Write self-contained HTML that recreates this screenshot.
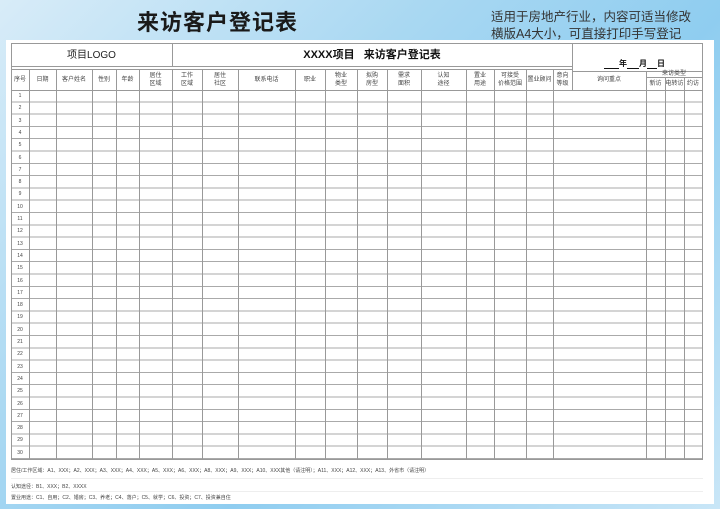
<!DOCTYPE html>
<html><head><meta charset="utf-8"><style>
*{margin:0;padding:0;box-sizing:border-box}
body{width:720px;height:509px;overflow:hidden;position:relative;font-family:"Liberation Sans","Noto Sans CJK SC",sans-serif;
background:linear-gradient(135deg,#d8ecf8 0%,#a9d8f2 35%,#8fcdf0 60%,#c9e6f7 100%)}
.p{position:absolute}
#title{left:0;width:435px;top:5px;text-align:center;font-size:22px;font-weight:bold;color:#1a1a1a;letter-spacing:1px}
#sub{left:491px;top:9px;font-size:12.5px;line-height:17px;color:#333}
#panel{left:6px;top:40px;width:708px;height:464px;background:#fff}
.v{position:absolute;width:1px;background:#999}
.h{position:absolute;height:1px;background:#999}
#grid{left:11px;top:90px;width:692px;height:370px;background:repeating-linear-gradient(to bottom,transparent 0,transparent 11.3px,#aaa 11.3px,#aaa 12.3px);border-left:1px solid #999;border-right:1px solid #999}
.t{position:absolute;font-size:6px;color:#444;text-align:center;line-height:8px}
.n{position:absolute;left:11px;width:18px;font-size:5px;color:#444;text-align:center}
.f{position:absolute;left:11px;font-size:5px;color:#444}
.u{display:inline-block;border-bottom:1px solid #111;height:9px;vertical-align:bottom}
</style></head><body>
<div class="p" id="title">来访客户登记表</div>
<div class="p" id="sub">适用于房地产行业，内容可适当修改<br>横版A4大小，可直接打印手写登记</div>
<div class="p" id="panel"></div>
<div class="h" style="left:11px;top:43px;width:692px"></div>
<div class="h" style="left:11px;top:66px;width:561px"></div>
<div class="h" style="left:11px;top:69px;width:561px"></div>
<div class="h" style="left:572px;top:71px;width:130px"></div>
<div class="h" style="left:646px;top:77px;width:56px"></div>
<div class="v" style="left:11px;top:43px;height:48px"></div>
<div class="v" style="left:172px;top:43px;height:23px"></div>
<div class="v" style="left:572px;top:43px;height:48px"></div>
<div class="v" style="left:702px;top:43px;height:48px"></div>
<div class="t" style="left:11px;width:161px;top:50px;font-size:10px;line-height:12px;color:#222">项目LOGO</div>
<div class="t" style="left:172px;width:400px;top:49px;font-size:11px;line-height:13px;font-weight:bold;color:#111">XXXX项目&nbsp;&nbsp;&nbsp;来访客户登记表</div>
<div class="t" style="left:604px;width:100px;top:59px;font-size:8px;line-height:10px;font-weight:bold;color:#111;text-align:left"><span class="u" style="width:15px"></span>年<span class="u" style="width:12px"></span>月<span class="u" style="width:10px"></span>日</div>
<div class="p" id="grid"></div>
<div class="h" style="left:11px;top:90px;width:692px"></div>
<div class="h" style="left:11px;top:459px;width:692px"></div>
<div class="v" style="left:29px;top:69px;height:391px"></div>
<div class="v" style="left:56px;top:69px;height:391px"></div>
<div class="v" style="left:92px;top:69px;height:391px"></div>
<div class="v" style="left:116px;top:69px;height:391px"></div>
<div class="v" style="left:139px;top:69px;height:391px"></div>
<div class="v" style="left:172px;top:69px;height:391px"></div>
<div class="v" style="left:202px;top:69px;height:391px"></div>
<div class="v" style="left:238px;top:69px;height:391px"></div>
<div class="v" style="left:295px;top:69px;height:391px"></div>
<div class="v" style="left:325px;top:69px;height:391px"></div>
<div class="v" style="left:357px;top:69px;height:391px"></div>
<div class="v" style="left:387px;top:69px;height:391px"></div>
<div class="v" style="left:421px;top:69px;height:391px"></div>
<div class="v" style="left:466px;top:69px;height:391px"></div>
<div class="v" style="left:494px;top:69px;height:391px"></div>
<div class="v" style="left:526px;top:69px;height:391px"></div>
<div class="v" style="left:553px;top:69px;height:391px"></div>
<div class="v" style="left:646px;top:71px;height:389px"></div>
<div class="v" style="left:665px;top:77px;height:383px"></div>
<div class="v" style="left:684px;top:77px;height:383px"></div>
<div class="t" style="left:11px;width:18px;top:76px">序号</div>
<div class="t" style="left:29px;width:27px;top:76px">日期</div>
<div class="t" style="left:56px;width:36px;top:76px">客户姓名</div>
<div class="t" style="left:92px;width:24px;top:76px">性别</div>
<div class="t" style="left:116px;width:23px;top:76px">年龄</div>
<div class="t" style="left:139px;width:33px;top:72px">居住<br>区域</div>
<div class="t" style="left:172px;width:30px;top:72px">工作<br>区域</div>
<div class="t" style="left:202px;width:36px;top:72px">居住<br>社区</div>
<div class="t" style="left:238px;width:57px;top:76px">联系电话</div>
<div class="t" style="left:295px;width:30px;top:76px">职业</div>
<div class="t" style="left:325px;width:32px;top:72px">物业<br>类型</div>
<div class="t" style="left:357px;width:30px;top:72px">拟购<br>房型</div>
<div class="t" style="left:387px;width:34px;top:72px">需求<br>面积</div>
<div class="t" style="left:421px;width:45px;top:72px">认知<br>途径</div>
<div class="t" style="left:466px;width:28px;top:72px">置业<br>用途</div>
<div class="t" style="left:494px;width:32px;top:72px">可接受<br>价格范围</div>
<div class="t" style="left:526px;width:27px;top:76px">置业顾问</div>
<div class="t" style="left:553px;width:19px;top:72px">意向<br>等级</div>
<div class="t" style="left:572px;width:74px;top:76px">询问重点</div>
<div class="t" style="left:646px;width:56px;top:70px">来访类型</div>
<div class="t" style="left:646px;width:19px;top:80px">新访</div>
<div class="t" style="left:665px;width:19px;top:80px">电转访</div>
<div class="t" style="left:684px;width:18px;top:80px">约访</div>
<div class="n" style="top:93px">1</div><div class="n" style="top:105.3px">2</div><div class="n" style="top:117.6px">3</div><div class="n" style="top:129.9px">4</div><div class="n" style="top:142.2px">5</div><div class="n" style="top:154.5px">6</div><div class="n" style="top:166.8px">7</div><div class="n" style="top:179.1px">8</div><div class="n" style="top:191.4px">9</div><div class="n" style="top:203.7px">10</div><div class="n" style="top:216px">11</div><div class="n" style="top:228.3px">12</div><div class="n" style="top:240.6px">13</div><div class="n" style="top:252.9px">14</div><div class="n" style="top:265.2px">15</div><div class="n" style="top:277.5px">16</div><div class="n" style="top:289.8px">17</div><div class="n" style="top:302.1px">18</div><div class="n" style="top:314.4px">19</div><div class="n" style="top:326.7px">20</div><div class="n" style="top:339px">21</div><div class="n" style="top:351.3px">22</div><div class="n" style="top:363.6px">23</div><div class="n" style="top:375.9px">24</div><div class="n" style="top:388.2px">25</div><div class="n" style="top:400.5px">26</div><div class="n" style="top:412.8px">27</div><div class="n" style="top:425.1px">28</div><div class="n" style="top:437.4px">29</div><div class="n" style="top:449.7px">30</div>
<div class="f" style="top:467px">居住/工作区域：A1、XXX；A2、XXX；A3、XXX；A4、XXX；A5、XXX；A6、XXX；A8、XXX；A9、XXX；A10、XXX其他（请注明）；A11、XXX；A12、XXX；A13、外省市（请注明）</div>
<div class="h" style="left:11px;top:478px;width:692px;background:#eee"></div>
<div class="f" style="top:483px">认知途径：B1、XXX；B2、XXXX</div>
<div class="h" style="left:11px;top:491px;width:692px;background:#eee"></div>
<div class="f" style="top:494px">置业用途：C1、自用；C2、婚房；C3、养老；C4、落户；C5、就学；C6、投资；C7、投资兼自住</div>
</body></html>
